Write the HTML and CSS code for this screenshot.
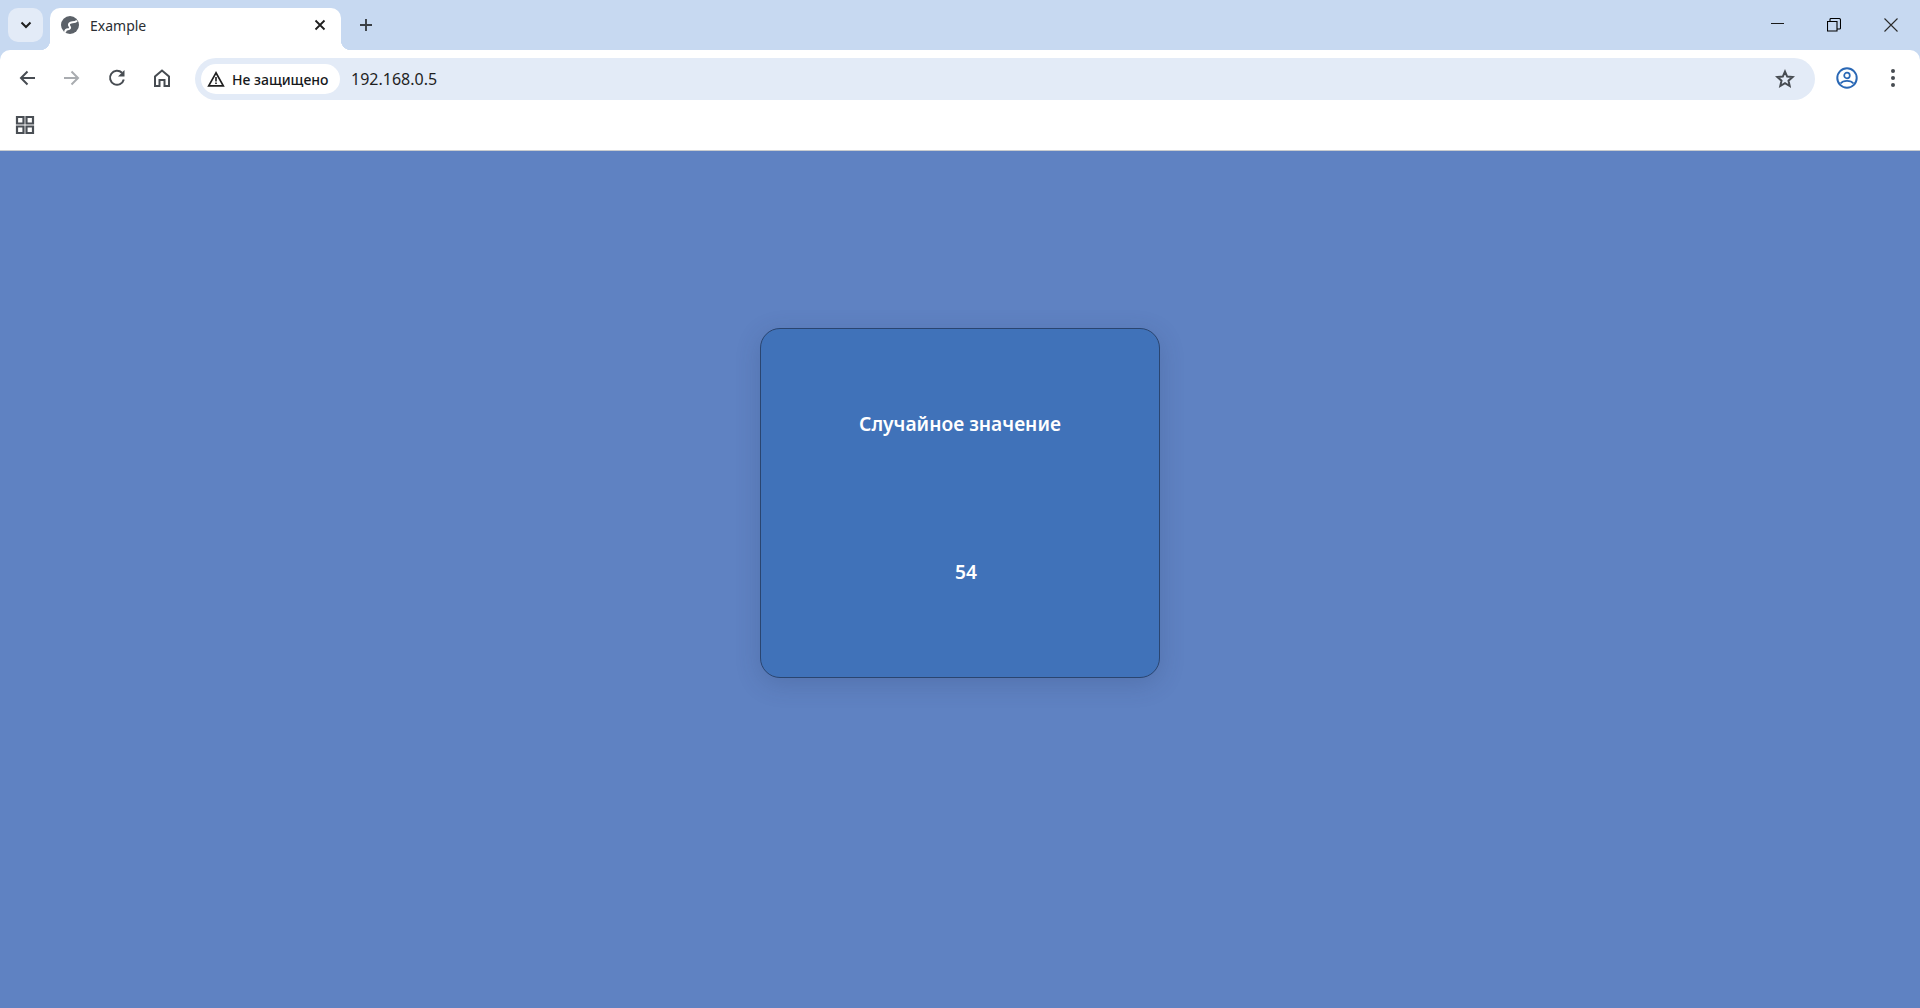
FILE: index.html
```html
<!DOCTYPE html>
<html lang="ru">
<head>
<meta charset="utf-8">
<title>Example</title>
<link rel="stylesheet" href="styles.css">
</head>
<body>
<header class="chrome">
  <div class="tabstrip">
    <div class="tabsearch">
      <svg class="ico" width="14" height="14" viewBox="0 0 14 14"><path d="M2.500 4.500L7 9l4.500-4.500" fill="none" stroke="#1f1f1f" stroke-width="2"/></svg>
    </div>
    <div class="tab">
      <svg class="ico" width="18" height="18" viewBox="0 0 18 18"><circle cx="9" cy="9" r="9" fill="#5b6168"/><path d="M4 16.500c.2-2 1.200-3.200 3-3.200 2 0 2.700-1.500 1.600-2.800C7.500 9 7.800 7.300 9.500 6.700c2-.6 4.500 0 6.500-2" fill="none" stroke="#fff" stroke-width="2"/></svg>
      <span class="tabtitle">Example</span>
      <svg class="ico tabclose" width="12" height="12" viewBox="0 0 12 12"><path d="M1.500 1.500l9 9M10.500 1.500l-9 9" stroke="#1f1f1f" stroke-width="1.800"/></svg>
    </div>
    <div class="newtab">
      <svg class="ico" width="14" height="14" viewBox="0 0 14 14"><path d="M7 1v12M1 7h12" stroke="#3a3f45" stroke-width="1.900"/></svg>
    </div>
    <div class="winctl">
      <div class="winbtn"><svg class="ico" width="14" height="14" viewBox="0 0 14 14"><path d="M1 5.500h13" stroke="#1a1a1a" stroke-width="1"/></svg></div>
      <div class="winbtn"><svg class="ico" width="14" height="14" viewBox="0 0 14 14"><path d="M.5 3.500h9.500v9.500H.500zM3 3.500V1.500c0-.5.300-1 1-1h8c.8 0 1.500.7 1.500 1.500v8c0 .6-.4 1-1 1H10" fill="none" stroke="#000" stroke-width="1.100"/></svg></div>
      <div class="winbtn"><svg class="ico" width="14" height="14" viewBox="0 0 14 14"><path d="M.5.500l13 13M13.500.500l-13 13" stroke="#2a2a2a" stroke-width="1.100"/></svg></div>
    </div>
  </div>
  <div class="toolbar">
    <div class="navbtn"><svg class="ico" width="18" height="18" viewBox="0 0 18 18"><path d="M17 9H3M9.500 2.500L3 9l6.500 6.500" fill="none" stroke="#474c52" stroke-width="2"/></svg></div>
    <div class="navbtn"><svg class="ico" width="18" height="18" viewBox="0 0 18 18"><path d="M1 9h14M8.500 2.500L15 9l-6.500 6.500" fill="none" stroke="#a9acb0" stroke-width="2"/></svg></div>
    <div class="navbtn"><svg class="ico" width="18" height="18" viewBox="0 0 18 18"><path d="M15.800 10.500A7 7 0 1 1 14 3.800" fill="none" stroke="#474c52" stroke-width="2"/><path d="M16.500 1v6.500H10z" fill="#474c52"/></svg></div>
    <div class="navbtn"><svg class="ico" width="18" height="18" viewBox="0 0 18 18"><path d="M2 17V7.500L9 1.500l7 6V17h-4.500v-6h-5v6z" fill="none" stroke="#474c52" stroke-width="2"/></svg></div>
    <div class="omnibox">
      <div class="chip">
        <svg class="ico" width="18" height="16" viewBox="0 0 18 16"><path d="M9 1.800L1.700 14.800h14.600z" fill="none" stroke="#1f1f1f" stroke-width="1.700"/><path d="M9 6v4.500M9 11.500v1.600" stroke="#1f1f1f" stroke-width="1.600"/></svg>
        <span class="chiptext">Не защищено</span>
      </div>
      <span class="url">192.168.0.5</span>
      <svg class="ico star" width="20" height="20" viewBox="0 0 20 20"><path d="M10 2.600l2.200 5 5.400.5-4.100 3.600 1.200 5.300L10 14.200 5.300 17l1.200-5.300L2.400 8.100l5.400-.5z" fill="none" stroke="#474c52" stroke-width="2"/></svg>
    </div>
    <div class="profile"><svg class="ico" width="22" height="22" viewBox="0 0 22 22"><circle cx="11" cy="11" r="9.700" fill="none" stroke="#2a68b5" stroke-width="2"/><circle cx="11" cy="8.500" r="2.800" fill="none" stroke="#2a68b5" stroke-width="1.700"/><path d="M4.500 16.500c1.500-2 4-2.700 6.500-2.700s5 .7 6.500 2.700" fill="none" stroke="#2a68b5" stroke-width="1.700"/></svg></div>
    <div class="menu"><svg class="ico" width="6" height="20" viewBox="0 0 6 20"><circle cx="3" cy="3" r="2" fill="#474c52"/><circle cx="3" cy="10" r="2" fill="#474c52"/><circle cx="3" cy="17" r="2" fill="#474c52"/></svg></div>
  </div>
  <div class="bookmarks">
    <svg class="ico" width="20" height="20" viewBox="0 0 20 20"><path d="M2 2h6.500v6.500H2zM11.500 2H18v6.500h-6.500zM2 11.500h6.500V18H2zM11.500 11.500H18V18h-6.500z" fill="none" stroke="#4a4f55" stroke-width="2.200"/></svg>
  </div>
</header>
<main class="page">
  <section class="card">
    <h1 class="cardtitle">Случайное значение</h1>
    <p class="cardvalue">54</p>
  </section>
</main>
</body>
</html>
```
FILE: styles.css
```css
html, body { margin: 0; height: 100%; overflow: hidden; }
body {
  display: flex;
  flex-direction: column;
  font-family: "Noto Sans", "Open Sans", sans-serif;
  background: #5f82c2;
}
.ico { display: block; flex: none; }

.chrome { flex: none; background: #c7d9f1; }
.tabstrip { height: 50px; display: flex; align-items: flex-start; }
.tabsearch {
  width: 35px; height: 34px; margin: 8px 0 0 8px;
  background: #e3ebf7; border-radius: 10px;
  display: flex; align-items: center; justify-content: center;
}
.tab {
  position: relative;
  width: 291px; height: 42px; margin: 8px 0 0 7px;
  padding: 0 15px 8px 11px; box-sizing: border-box;
  background: #fff; border-radius: 10px 10px 0 0;
  display: flex; align-items: center;
}
.tab::before, .tab::after {
  content: ""; position: absolute; bottom: 0; width: 10px; height: 10px;
}
.tab::before { left: -10px; background: radial-gradient(circle at 0 0, transparent 10px, #fff 10.500px); }
.tab::after { right: -10px; background: radial-gradient(circle at 100% 0, transparent 10px, #fff 10.500px); }
.tabtitle { margin-left: 11px; font-size: 14px; color: #2b2e33; flex: 1; }
.newtab { width: 14px; margin: 18px 0 0 18px; }
.winctl { margin-left: auto; display: flex; padding-right: 1px; }
.winbtn {
  width: 57px; height: 50px; padding: 18px 0 0 22px; box-sizing: border-box;
}

.toolbar {
  height: 50px; background: #fff; border-radius: 10px 10px 0 0;
  display: flex; align-items: flex-start; padding-left: 9px;
}
.navbtn {
  width: 36px; height: 36px; margin: 10px 9px 0 0;
  display: flex; align-items: center; justify-content: center;
}
.omnibox {
  flex: 1; height: 42px; margin: 8px 0 0 6px;
  background: #e3ebf7; border-radius: 21px;
  display: flex; align-items: center; padding: 0 20px 0 6px;
}
.chip {
  height: 30px; width: 139px; box-sizing: border-box;
  background: #fff; border-radius: 15px;
  display: flex; align-items: center; padding-left: 6px;
}
.chiptext { margin-left: 7px; font-size: 14px; font-weight: 500; color: #16181b; white-space: nowrap; }
.url { margin-left: 11px; font-size: 16px; color: #1f1f1f; flex: 1; }
.profile { margin: 17px 0 0 21px; }
.menu { margin: 18px 24px 0 32px; }
.bookmarks { height: 35px; background: #fff; border-bottom: 1px solid #c9cccf; padding: 15px 0 0 15px; }

.page {
  flex: 1; min-height: 0;
  display: flex; justify-content: center; align-items: flex-start;
  padding-top: 177px;
}
.card {
  width: 400px; height: 350px; box-sizing: border-box;
  background: #4072b9;
  border: 1px solid #2a4570;
  border-radius: 20px;
  box-shadow: 0 6px 24px rgba(40, 60, 100, .22);
  color: #fff;
  text-align: center;
  display: flex; flex-direction: column;
}
.cardtitle { margin: 79px 0 0; font-size: 19.200px; line-height: 32px; font-weight: 600; }
.cardvalue { margin: 116px 0 0; padding-left: 12px; font-size: 19.200px; line-height: 32px; font-weight: 600; }
```
